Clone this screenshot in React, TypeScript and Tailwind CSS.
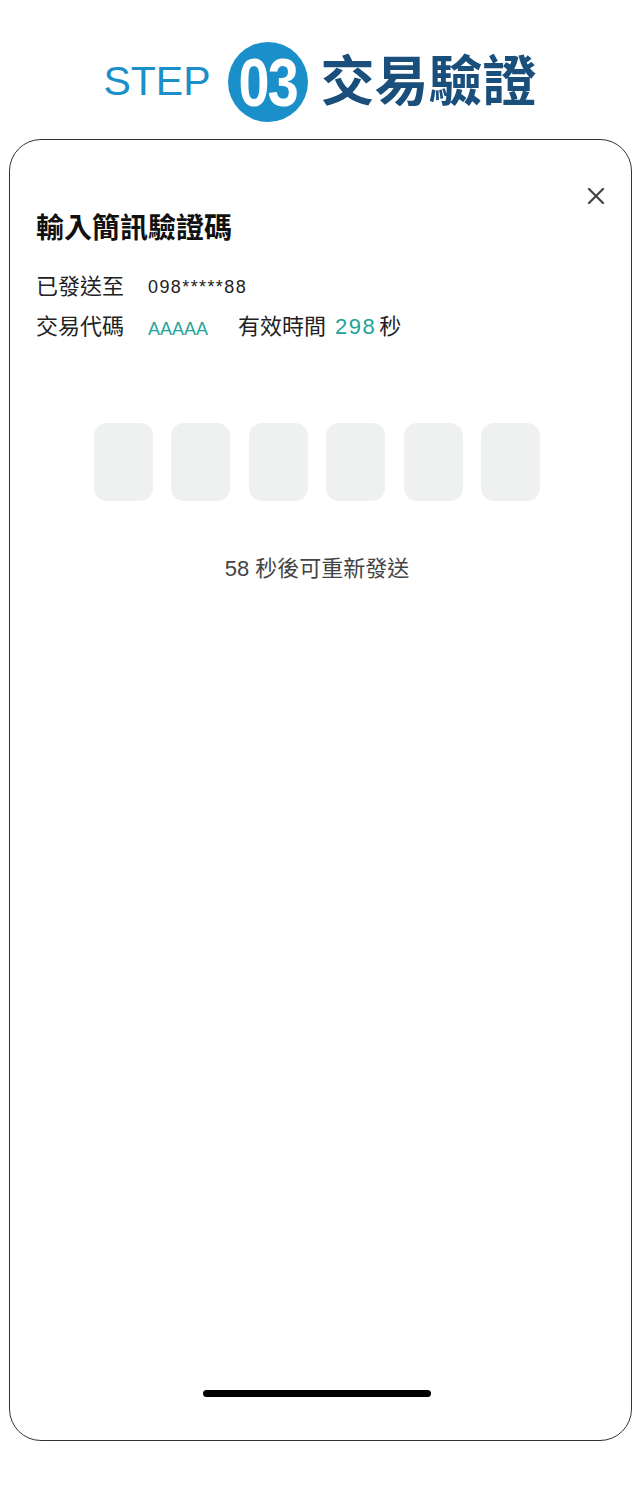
import React from 'react';

const CJK = "font-['Liberation_Sans','Noto_Sans_CJK_TC',sans-serif]";

const OtpBox: React.FC = () => (
  <div className="h-[78px] w-[59px] rounded-[13px] bg-[#eff0f0]" />
);

export default function App() {
  const boxes = [0, 1, 2, 3, 4, 5];

  return (
    <div className={`flex min-h-[1489px] w-[640px] flex-col bg-white ${CJK}`}>
      {/* Step header */}
      <div className="flex h-[139px] items-center justify-center pt-[24px]">
        <span className="text-[41px] leading-none text-[#1a8fca]">STEP</span>
        <div className="ml-[17px] flex h-[80px] w-[80px] items-center justify-center rounded-full bg-[#1a8fca]">
          <span className="scale-x-[0.82] text-[68px] font-bold leading-none tracking-[-2px] text-white">03</span>
        </div>
        <span className="ml-[13px] text-[54px] font-bold leading-none text-[#1a4e7b]">交易驗證</span>
      </div>

      {/* Phone frame */}
      <div className="relative mx-[9px] flex h-[1302px] w-[623px] flex-col rounded-[32px] border border-[#333]">
        <button className="absolute right-[25px] top-[46px] flex h-[20px] w-[20px] items-center justify-center">
          <svg width="18" height="18" viewBox="0 0 18 18" fill="none">
            <path d="M2 2L16 16M16 2L2 16" stroke="#444" strokeWidth="2.2" strokeLinecap="round" />
          </svg>
        </button>

        <div className="pl-[26px] pt-[72px]">
          <h1 className="text-[28px] font-bold leading-[34px] text-[#111]">輸入簡訊驗證碼</h1>

          <div className="mt-[22px] flex items-center text-[22px] leading-[38px] text-[#222]">
            <span>已發送至</span>
            <span className="ml-[24px] text-[18px] tracking-[1.4px]">098*****88</span>
          </div>
          <div className="flex items-center text-[22px] leading-[38px] text-[#222]">
            <span>交易代碼</span>
            <span className="ml-[24px] mt-[4px] text-[18px] text-[#1ea497]">AAAAA</span>
            <span className="ml-[30px]">有效時間</span>
            <span className="ml-[9px] text-[22px] tracking-[1.5px] text-[#1ea497]">298</span>
            <span className="ml-[3px]">秒</span>
          </div>
        </div>

        <div className="mt-[75px] flex justify-center gap-[18.4px] pr-[7px]">
          {boxes.map((b) => (
            <OtpBox key={b} />
          ))}
        </div>

        <p className="mt-[52px] pr-[7px] text-center text-[22px] leading-[32px] text-[#444]">58 秒後可重新發送</p>

        <div className="mt-auto mb-[43px] flex justify-center pr-[7px]">
          <div className="h-[7px] w-[228px] rounded-full bg-black" />
        </div>
      </div>
    </div>
  );
}
